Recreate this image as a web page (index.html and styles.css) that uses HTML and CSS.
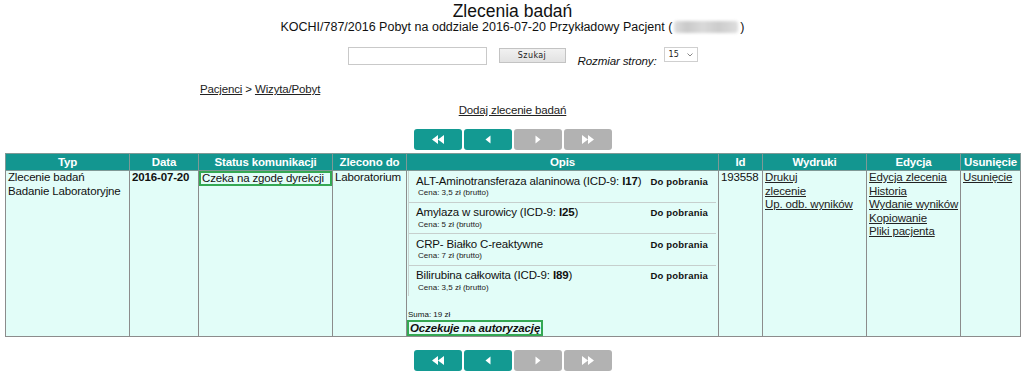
FILE: index.html
```html
<!DOCTYPE html>
<html lang="pl">
<head>
<meta charset="utf-8">
<title>Zlecenia badań</title>
<link rel="stylesheet" href="styles.css">
</head>
<body>
<div class="page">
  <h1 class="title">Zlecenia badań</h1>
  <div class="subtitle">KOCHI/787/2016 Pobyt na oddziale 2016-07-20 Przykładowy Pacjent (<span class="blurred"></span>)</div>

  <form class="search">
    <input class="search-input" type="text">
    <button class="search-btn" type="button">Szukaj</button>
    <span class="size-label">Rozmiar strony:</span>
    <span class="size-select">15
      <svg class="chev" width="6" height="4" viewBox="0 0 6 4"><path d="M0.5 0.5 L3 3 L5.5 0.5" fill="none" stroke="#888" stroke-width="1"/></svg>
    </span>
  </form>

  <div class="crumbs"><a href="#">Pacjenci</a> &gt; <a href="#">Wizyta/Pobyt</a></div>
  <div class="add"><a href="#">Dodaj zlecenie badań</a></div>

  <div class="pager">
    <span class="pg on"><svg width="12" height="9" viewBox="0 0 12 9"><path d="M0 4.5 L6 0 L6 9 Z M6 4.5 L12 0 L12 9 Z" fill="#fff"/></svg></span>
    <span class="pg on"><svg width="6" height="9" viewBox="0 0 6 9"><path d="M0.5 4.5 L5.5 0.5 L5.5 8.5 Z" fill="#fff"/></svg></span>
    <span class="pg off"><svg width="6" height="9" viewBox="0 0 6 9"><path d="M0.5 0.5 L5.5 4.5 L0.5 8.5 Z" fill="#fff"/></svg></span>
    <span class="pg off"><svg width="12" height="9" viewBox="0 0 12 9"><path d="M0 0 L6 4.5 L0 9 Z M6 0 L12 4.5 L6 9 Z" fill="#fff"/></svg></span>
  </div>

  <table class="grid">
    <colgroup>
      <col class="c-typ"><col class="c-data"><col class="c-status"><col class="c-zlec"><col class="c-opis"><col class="c-id"><col class="c-wyd"><col class="c-edy"><col class="c-usu">
    </colgroup>
    <thead>
      <tr><th>Typ</th><th>Data</th><th>Status komunikacji</th><th>Zlecono do</th><th>Opis</th><th>Id</th><th>Wydruki</th><th>Edycja</th><th>Usunięcie</th></tr>
    </thead>
    <tbody>
      <tr>
        <td>Zlecenie badań<br>Badanie Laboratoryjne</td>
        <td class="bold">2016-07-20</td>
        <td class="status"><div class="green-box">Czeka na zgodę dyrekcji</div></td>
        <td>Laboratorium</td>
        <td class="opis">
          <div class="items">
            <div class="item">
              <div class="item-main"><span>ALT-Aminotransferaza alaninowa (ICD-9: <b>I17</b>)</span><span class="state">Do pobrania</span></div>
              <div class="price">Cena: 3,5 zł (brutto)</div>
            </div>
            <div class="item">
              <div class="item-main"><span>Amylaza w surowicy (ICD-9: <b>I25</b>)</span><span class="state">Do pobrania</span></div>
              <div class="price">Cena: 5 zł (brutto)</div>
            </div>
            <div class="item">
              <div class="item-main"><span>CRP- Białko C-reaktywne</span><span class="state">Do pobrania</span></div>
              <div class="price">Cena: 7 zł (brutto)</div>
            </div>
            <div class="item">
              <div class="item-main"><span>Bilirubina całkowita (ICD-9: <b>I89</b>)</span><span class="state">Do pobrania</span></div>
              <div class="price">Cena: 3,5 zł (brutto)</div>
            </div>
          </div>
          <div class="sum">Suma: 19 zł</div>
          <div class="auth">Oczekuje na autoryzację</div>
        </td>
        <td>193558</td>
        <td class="links"><a href="#">Drukuj<br>zlecenie</a><br><a href="#">Up. odb. wyników</a></td>
        <td class="links"><a href="#">Edycja zlecenia</a><br><a href="#">Historia</a><br><a href="#">Wydanie wyników</a><br><a href="#">Kopiowanie</a><br><a href="#">Pliki pacjenta</a></td>
        <td class="links"><a href="#">Usunięcie</a></td>
      </tr>
    </tbody>
  </table>

  <div class="pager bottom">
    <span class="pg on"><svg width="12" height="9" viewBox="0 0 12 9"><path d="M0 4.5 L6 0 L6 9 Z M6 4.5 L12 0 L12 9 Z" fill="#fff"/></svg></span>
    <span class="pg on"><svg width="6" height="9" viewBox="0 0 6 9"><path d="M0.5 4.5 L5.5 0.5 L5.5 8.5 Z" fill="#fff"/></svg></span>
    <span class="pg off"><svg width="6" height="9" viewBox="0 0 6 9"><path d="M0.5 0.5 L5.5 4.5 L0.5 8.5 Z" fill="#fff"/></svg></span>
    <span class="pg off"><svg width="12" height="9" viewBox="0 0 12 9"><path d="M0 0 L6 4.5 L0 9 Z M6 0 L12 4.5 L6 9 Z" fill="#fff"/></svg></span>
  </div>
</div>
</body>
</html>
```

FILE: styles.css
```css
html, body {
  margin: 0;
  padding: 0;
  background: #fff;
}
body {
  font-family: "Liberation Sans", Arial, sans-serif;
  font-size: 11.5px;
  letter-spacing: -0.15px;
  color: #111;
}
a {
  color: #222;
  text-decoration: underline;
}
.page {
  padding: 0 3px 0 5px;
}
.title {
  margin: 0;
  padding-top: 2px;
  font-size: 17.5px;
  font-weight: normal;
  line-height: 19px;
  text-align: center;
  letter-spacing: 0;
}
.subtitle {
  font-size: 12.5px;
  line-height: 13px;
  text-align: center;
  letter-spacing: 0;
}
.blurred {
  display: inline-block;
  width: 64px;
  height: 12px;
  vertical-align: -2px;
  margin: 0 2px;
  background: linear-gradient(90deg, #dedede 0%, #c9c9c9 20%, #d9d9d9 45%, #cccccc 70%, #dedede 100%);
  filter: blur(1.6px);
  border-radius: 3px;
}
.search {
  display: flex;
  align-items: flex-start;
  justify-content: center;
  padding-left: 21px;
  margin: 13px 0 0;
  height: 18px;
}
.search-input {
  box-sizing: border-box;
  width: 139px;
  height: 18px;
  margin: 0;
  border: 1px solid #c9c9c9;
  background: #fff;
  padding: 0 2px;
}
.search-btn {
  box-sizing: border-box;
  width: 67px;
  height: 15px;
  margin: 1px 0 0 12px;
  padding: 0;
  border: 1px solid #c3c3c3;
  background: linear-gradient(#f1f1f1, #e2e2e2);
  font-family: "DejaVu Sans", sans-serif;
  font-size: 8px;
  letter-spacing: 0.4px;
  color: #222;
  line-height: 13px;
}
.size-label {
  margin: 7px 0 0 12px;
  font-style: italic;
  font-size: 11.6px;
  line-height: 14px;
}
.size-select {
  box-sizing: border-box;
  display: flex;
  align-items: center;
  justify-content: space-between;
  width: 34px;
  height: 15px;
  margin: 0 0 0 8px;
  padding: 0 4px 0 3px;
  border: 1px solid #cfcfcf;
  background: #fff;
  font-family: "DejaVu Sans", sans-serif;
  font-size: 8px;
  letter-spacing: 0.3px;
  color: #222;
}
.crumbs {
  margin: 17px 0 0 195px;
  line-height: 14px;
}
.add {
  margin-top: 7px;
  line-height: 14px;
  text-align: center;
}
.pager {
  display: flex;
  justify-content: center;
  gap: 2px;
  margin-top: 12px;
  padding-left: 1px;
}
.pager.bottom {
  margin-top: 13px;
}
.pg {
  display: flex;
  align-items: center;
  justify-content: center;
  width: 48px;
  height: 21px;
  border-radius: 3px;
}
.pg.on {
  background: #139a92;
}
.pg.off {
  background: #b2b2b2;
}
.grid {
  width: 1015px;
  margin-top: 3px;
  border-collapse: collapse;
  table-layout: fixed;
  background: #e2fdf8;
}
.c-typ { width: 124px; }
.c-data { width: 69px; }
.c-status { width: 134px; }
.c-zlec { width: 74px; }
.c-opis { width: 312px; }
.c-id { width: 44px; }
.c-wyd { width: 104px; }
.c-edy { width: 94px; }
.c-usu { width: 60px; }
.grid th {
  background: #139690;
  color: #fff;
  font-weight: bold;
  line-height: 14px;
  padding: 1px 1px;
  border: 1px solid #7f9996;
  text-align: center;
  white-space: nowrap;
  overflow: hidden;
}
.grid td {
  border: 1px solid #8c8c8c;
  padding: 0 2px;
  vertical-align: top;
  line-height: 13.5px;
  overflow: hidden;
}
.grid td.bold {
  font-weight: bold;
}
.grid td.status {
  padding: 0;
}
.green-box {
  border: 2px solid #34a853;
  padding: 0 1px;
  line-height: 11px;
}
.grid td.opis {
  padding: 0;
}
.items {
  margin-left: 1px;
  margin-right: 2px;
  border-left: 1px solid #c9d3d1;
}
.item {
  padding: 3.5px 8px 3.6px 7px;
  border-bottom: 1px solid #c6cfcd;
}
.item:last-child {
  border-bottom: none;
}
.item-main {
  display: flex;
  align-items: baseline;
  justify-content: space-between;
  height: 13.5px;
  line-height: 13.5px;
}
.state {
  font-weight: bold;
  font-size: 9.5px;
  letter-spacing: 0.2px;
}
.price {
  font-size: 8px;
  letter-spacing: 0;
  line-height: 10px;
  padding-left: 2px;
  color: #222;
}
.sum {
  margin-top: 13.4px;
  font-size: 8px;
  letter-spacing: 0;
  line-height: 10px;
  padding-left: 1px;
}
.auth {
  display: block;
  width: max-content;
  border: 2px solid #34a853;
  padding: 0 1px;
  font-weight: bold;
  font-style: italic;
  line-height: 12px;
}
.links {
  white-space: nowrap;
}
```
